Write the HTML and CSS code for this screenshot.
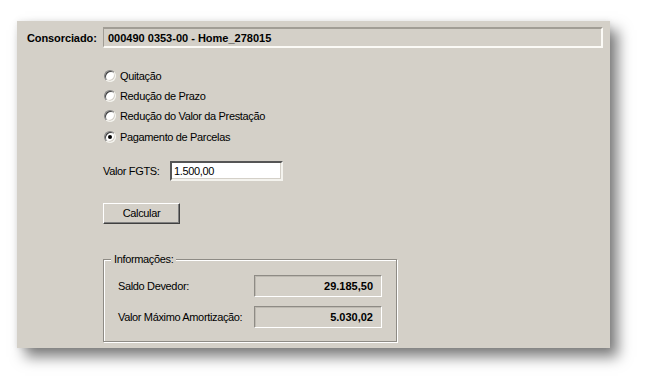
FILE: index.html
```html
<!DOCTYPE html>
<html lang="pt-BR">
<head>
<meta charset="utf-8">
<title>Consorciado FGTS</title>
<link rel="stylesheet" href="styles.css">
</head>
<body>
<div class="stage">
  <div class="panel">
    <div class="header">
      <span class="header-label">Consorciado:</span>
      <div class="header-field">000490 0353-00 - Home_278015</div>
    </div>
    <div class="content">
      <div class="radios">
        <div class="radio-row"><span class="radio"></span><span>Quitação</span></div>
        <div class="radio-row"><span class="radio"></span><span>Redução de Prazo</span></div>
        <div class="radio-row"><span class="radio"></span><span>Redução do Valor da Prestação</span></div>
        <div class="radio-row"><span class="radio checked"></span><span>Pagamento de Parcelas</span></div>
      </div>
      <div class="fgts-row">
        <span class="fgts-label">Valor FGTS:</span>
        <div class="input">1.500,00</div>
      </div>
      <div class="button">Calcular</div>
      <div class="group">
        <span class="legend">Informações:</span>
        <div class="info-row">
          <span class="info-label">Saldo Devedor:</span>
          <div class="info-field">29.185,50</div>
        </div>
        <div class="info-row">
          <span class="info-label">Valor Máximo Amortização:</span>
          <div class="info-field">5.030,02</div>
        </div>
      </div>
    </div>
  </div>
</div>
</body>
</html>
```

FILE: styles.css
```css
* { box-sizing: border-box; }
html, body { margin: 0; padding: 0; background: #ffffff; }
body {
  font-family: "Liberation Sans", Arial, sans-serif;
  font-size: 11px;
  letter-spacing: -0.35px;
  color: #000;
  width: 652px;
  height: 390px;
  overflow: hidden;
}
.stage {
  padding: 21px 0 0 17px;
}
.panel {
  width: 593px;
  height: 327px;
  background: #d4d0c8;
  box-shadow: 0 0 6px rgba(0,0,0,0.08), 8px 9px 13px rgba(0,0,0,0.5);
  padding: 6px 7px 0 10px;
}
.header {
  display: flex;
  align-items: center;
  height: 21px;
}
.header-label {
  width: 76px;
  font-weight: bold;
  letter-spacing: -0.1px;
}
.header-field {
  flex: 1;
  height: 21px;
  border-top: 2px solid #a19d95;
  border-left: 1px solid #a19d95;
  border-right: 2px solid #fbfaf6;
  border-bottom: 2px solid #fbfaf6;
  font-weight: bold;
  letter-spacing: 0;
  padding: 2px 0 0 4px;
  line-height: 14px;
}
.content {
  padding-left: 76px;
  padding-top: 18px;
}
.radio-row {
  display: flex;
  align-items: center;
  height: 20px;
  gap: 4px;
}
.radio-row:last-child { height: 21px; }
.radio {
  width: 12px;
  height: 12px;
  margin-left: 1px;
  border-radius: 50%;
  background: #fff;
  border: 1px solid;
  border-color: #808080 #f4f3ee #f4f3ee #808080;
  box-shadow: inset 1px 1px 0 #404040, inset -1px -1px 0 #d4d0c8;
  position: relative;
}
.radio.checked::after {
  content: "";
  position: absolute;
  left: 3px;
  top: 3px;
  width: 4px;
  height: 4px;
  border-radius: 50%;
  background: #000;
}
.fgts-row {
  display: flex;
  align-items: center;
  margin-top: 14px;
  height: 20px;
}
.fgts-label {
  width: 67px;
}
.input {
  width: 113px;
  height: 20px;
  background: #fff;
  border: 2px solid;
  border-color: #555 #f4f3ee #f4f3ee #555;
  box-shadow: inset -1px -1px 0 #d4d0c8;
  padding: 2px 0 0 2px;
  line-height: 13px;
}
.button {
  margin-top: 22px;
  width: 77px;
  height: 21px;
  border: 1px solid;
  border-color: #fff #404040 #404040 #fff;
  box-shadow: inset -1px -1px 0 #808080;
  display: flex;
  align-items: center;
  justify-content: center;
  padding-bottom: 1px;
}
.group {
  position: relative;
  margin-top: 35px;
  width: 294px;
  height: 83px;
  border: 1px solid #8e8b85;
  box-shadow: 1px 1px 0 #fff, inset 1px 1px 0 #fff;
  padding: 15px 0 0 14px;
}
.legend {
  position: absolute;
  left: 7px;
  top: -7px;
  background: #d4d0c8;
  padding: 0 3px;
  line-height: 13px;
}
.info-row {
  display: flex;
  align-items: center;
  height: 22px;
  margin-bottom: 9px;
}
.info-label {
  width: 136px;
}
.info-field {
  width: 128px;
  height: 22px;
  border: 1px solid;
  border-color: #8e8b85 #fff #fff #8e8b85;
  box-shadow: inset 1px 1px 0 #bdb9b1;
  font-weight: bold;
  letter-spacing: 0;
  text-align: right;
  padding: 4px 8px 0 0;
  line-height: 13px;
}
```
